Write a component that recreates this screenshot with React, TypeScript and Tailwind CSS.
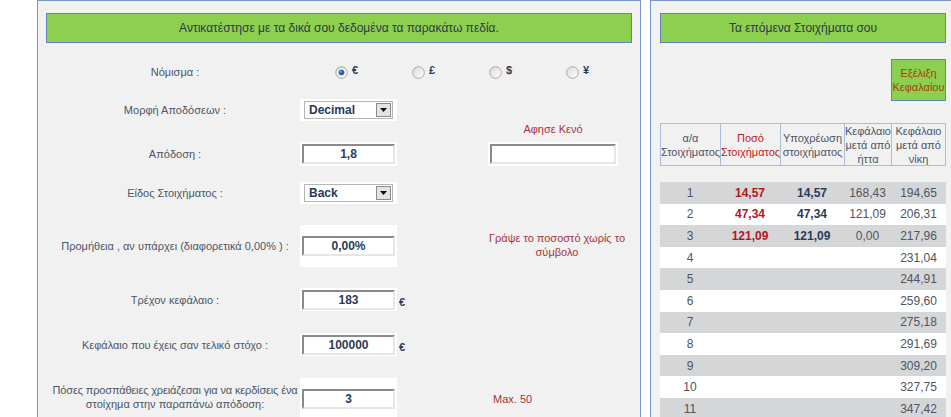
import React from "react";

const font = { fontFamily: '"Liberation Sans", Arial, sans-serif' };

function Radio({ on }: { on?: boolean }) {
  return (
    <svg width="13" height="13" viewBox="0 0 13 13" className="shrink-0">
      <defs>
        <linearGradient id={on ? "rg1" : "rg0"} x1="0" y1="0" x2="1" y2="1">
          <stop offset="0" stopColor="#d9d9d9" />
          <stop offset="1" stopColor="#ffffff" />
        </linearGradient>
      </defs>
      <circle cx="6.5" cy="6.5" r="5.8" fill={`url(#${on ? "rg1" : "rg0"})`} stroke="#a8a8a8" strokeWidth="1" />
      {on && <circle cx="6.5" cy="6.5" r="2.8" fill="#2c5d9e" />}
      {on && <circle cx="5.8" cy="5.8" r="1" fill="#8fb3e0" />}
    </svg>
  );
}

function Field({ value, w = "w-[93px]" }: { value: string; w?: string }) {
  return (
    <div
      className={`${w} h-[20px] bg-white border-2 border-t-[#8a8a8a] border-l-[#8a8a8a] border-b-[#e6e6e6] border-r-[#e6e6e6] flex items-center justify-center text-[12px] font-bold text-[#2b3b5a]`}
    >
      {value}
    </div>
  );
}

function Select({ value }: { value: string }) {
  return (
    <div className="w-[89px] h-[18px] bg-white border border-[#b5b5b5] flex items-center justify-between pl-[4px] pr-[1px] text-[12px] font-bold text-[#243a5e]">
      <span>{value}</span>
      <div className="w-[15px] h-[14px] bg-[#e4e4e4] border border-[#8c8c8c] flex items-center justify-center">
        <svg width="7" height="4" viewBox="0 0 7 4">
          <path d="M0 0h7L3.5 4z" fill="#111" />
        </svg>
      </div>
    </div>
  );
}

function Label({ children }: { children: React.ReactNode }) {
  return (
    <div className="w-[262px] shrink-0 pl-[12px] text-center text-[11px] leading-[14px] text-[#4b5668]">{children}</div>
  );
}

const rows = [
  ["1", "14,57", "14,57", "168,43", "194,65"],
  ["2", "47,34", "47,34", "121,09", "206,31"],
  ["3", "121,09", "121,09", "0,00", "217,96"],
  ["4", "", "", "", "231,04"],
  ["5", "", "", "", "244,91"],
  ["6", "", "", "", "259,60"],
  ["7", "", "", "", "275,18"],
  ["8", "", "", "", "291,69"],
  ["9", "", "", "", "309,20"],
  ["10", "", "", "", "327,75"],
  ["11", "", "", "", "347,42"],
];

const cols = ["w-[60px]", "w-[60px]", "w-[64px]", "w-[47px]", "w-[54px]"];

export default function App() {
  return (
    <div className="w-[951px] h-[417px] overflow-hidden bg-white flex" style={font}>
      {/* left panel */}
      <div className="ml-[37px] w-[604px] h-[440px] shrink-0 bg-[#f1f1f1] border border-[#7896c4] px-[8px]">
        <div className="mt-[12px] h-[30px] bg-[#8dcf4e] border border-[#5f83b8] flex items-center justify-center text-[12px] text-[#2b3a4f]">
          Αντικατέστησε με τα δικά σου δεδομένα τα παρακάτω πεδία.
        </div>

        <div className="-ml-[8px]">
          {/* currency */}
          <div className="mt-[19px] h-[20px] flex items-center">
            <Label>Νόμισμα :</Label>
            <div className="ml-[35px] flex">
              {[
                ["€", true],
                ["£", false],
                ["$", false],
                ["¥", false],
              ].map(([s, on], i) => (
                <div key={i} className="w-[77px] flex items-center gap-[4px]">
                  <Radio on={on as boolean} />
                  <span className="text-[11px] font-bold text-[#2b3b5a] -mt-[3px]">{s as string}</span>
                </div>
              ))}
            </div>
          </div>

          {/* odds format */}
          <div className="mt-[17px] h-[22px] flex items-center">
            <Label>Μορφή Αποδόσεων :</Label>
            <div className="w-[97px] h-[22px] bg-white flex items-center justify-center">
              <Select value="Decimal" />
            </div>
          </div>

          {/* odds */}
          <div className="mt-[1px] h-[44px] flex items-end">
            <div className="h-[24px] flex items-center">
              <Label>Απόδοση :</Label>
            </div>
            <div className="w-[97px] h-[24px] bg-white flex items-center justify-center">
              <Field value="1,8" />
            </div>
            <div className="ml-[90px] w-[132px] flex flex-col items-center">
              <div className="text-[11px] leading-[14px] text-[#a8323a]">Αφησε Κενό</div>
              <div className="mt-[6px] h-[24px] px-[2px] bg-white flex items-center">
                <Field value="" w="w-[126px]" />
              </div>
            </div>
          </div>

          {/* bet type */}
          <div className="mt-[16px] h-[22px] flex items-center">
            <Label>Είδος Στοιχήματος :</Label>
            <div className="w-[97px] h-[22px] bg-white flex items-center justify-center">
              <Select value="Back" />
            </div>
          </div>

          {/* commission */}
          <div className="mt-[21px] h-[42px] flex items-center">
            <Label>Προμήθεια , αν υπάρχει (διαφορετικά 0,00% ) :</Label>
            <div className="w-[97px] h-[42px] bg-white flex items-center justify-center">
              <Field value="0,00%" />
            </div>
            <div className="ml-[90px] w-[140px] text-center text-[11px] leading-[14px] text-[#a8323a] -mt-[3px]">
              Γράψε το ποσοστό χωρίς το σύμβολο
            </div>
          </div>

          {/* bank */}
          <div className="mt-[21px] h-[23px] flex items-center">
            <Label>Τρέχον κεφάλαιο :</Label>
            <div className="w-[97px] h-[23px] bg-white flex items-center justify-center">
              <Field value="183" />
            </div>
            <span className="ml-[2px] mt-[6px] text-[11px] font-bold text-[#2b3b5a]">€</span>
          </div>

          {/* target */}
          <div className="mt-[22px] h-[23px] flex items-center">
            <Label>Κεφάλαιο που έχεις σαν τελικό στόχο :</Label>
            <div className="w-[97px] h-[23px] bg-white flex items-center justify-center">
              <Field value="100000" />
            </div>
            <span className="ml-[2px] mt-[6px] text-[11px] font-bold text-[#2b3b5a]">€</span>
          </div>

          {/* tries */}
          <div className="mt-[22px] h-[42px] flex items-center">
            <div className="w-[262px] shrink-0 pl-[12px] flex flex-col items-center text-[11px] leading-[14px] text-[#4b5668] -mt-[4px] whitespace-nowrap">
              <span className="tracking-[-0.15px]">Πόσες προσπάθειες χρειάζεσαι για να κερδίσεις ένα</span>
              <span>στοίχημα στην παραπάνω απόδοση:</span>
            </div>
            <div className="w-[97px] h-[42px] bg-white flex items-center justify-center">
              <Field value="3" />
            </div>
            <div className="ml-[96px] text-[11px] text-[#a8323a]">Max. 50</div>
          </div>
        </div>
      </div>

      {/* right panel */}
      <div className="ml-[9px] w-[310px] h-[440px] shrink-0 bg-[#f1f1f1] border border-[#7896c4] pl-[9px]">
        <div className="mt-[12px] w-[286px] h-[30px] bg-[#8dcf4e] border border-[#5f83b8] flex items-center justify-center text-[12px] text-[#2b3a4f]">
          Τα επόμενα Στοιχήματα σου
        </div>

        <div className="w-[286px] flex justify-end">
          <div className="mt-[16px] w-[55px] h-[42px] bg-[#8dcf4e] border border-[#5f83b8] flex items-center justify-center text-center text-[11px] leading-[14px] text-[#a8400c]">
            Εξέλιξη
            <br />
            Κεφαλαίου
          </div>
        </div>

        {/* table header */}
        <div className="mt-[22px] w-[286px] h-[43px] flex border border-[#a7bedd] text-[11px] leading-[14px] text-[#4b5668]">
          <div className={`${cols[0]} border-r border-[#a7bedd] flex items-center justify-center text-center`}>
            α/α
            <br />
            Στοιχήματος
          </div>
          <div className={`${cols[1]} border-r border-[#a7bedd] flex items-center justify-center text-center text-[#c4161c]`}>
            Ποσό
            <br />
            Στοιχήματος
          </div>
          <div className={`${cols[2]} border-r border-[#a7bedd] flex items-center justify-center text-center`}>
            Υποχρέωση
            <br />
            στοιχήματος
          </div>
          <div className={`${cols[3]} border-r border-[#a7bedd] flex items-center justify-center text-center`}>
            Κεφάλαιο
            <br />
            μετά από
            <br />
            ήττα
          </div>
          <div className="flex-1 flex items-center justify-center text-center">
            Κεφάλαιο
            <br />
            μετά από
            <br />
            νίκη
          </div>
        </div>

        {/* rows */}
        <div className="mt-[16px] w-[286px] text-[12px]">
          {rows.map((r, i) => (
            <div key={i} className={`h-[21.6px] flex items-center ${i % 2 === 0 ? "bg-[#d5d6d8]" : "bg-white"}`}>
              <div className={`${cols[0]} text-center text-[#4f5561]`}>{r[0]}</div>
              <div className={`${cols[1]} text-center font-bold text-[#b3161d]`}>{r[1]}</div>
              <div className={`${cols[2]} text-center font-bold text-[#2b3b5a]`}>{r[2]}</div>
              <div className={`${cols[3]} text-center text-[#4f5561]`}>{r[3]}</div>
              <div className="flex-1 text-center text-[#4f5561]">{r[4]}</div>
            </div>
          ))}
        </div>
      </div>
    </div>
  );
}
